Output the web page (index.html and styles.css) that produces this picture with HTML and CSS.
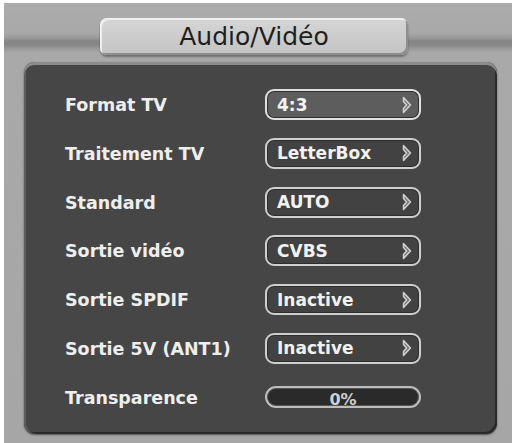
FILE: index.html
```html
<!DOCTYPE html>
<html lang="fr">
<head>
<meta charset="utf-8">
<title>Audio/Vidéo</title>
<link rel="stylesheet" href="styles.css">
</head>
<body>
<div class="screen">
  <div class="title-tab">Audio/Vidéo</div>
  <div class="panel">
    <div class="row">
      <div class="label">Format TV</div>
      <div class="value selected"><span>4:3</span><svg class="arrow" viewBox="0 0 10 18" width="10" height="18"><polygon points="1.5,1.5 8.5,9 1.5,16.5 1.5,12.5 4.5,9 1.5,5.5"/></svg></div>
    </div>
    <div class="row">
      <div class="label">Traitement TV</div>
      <div class="value"><span>LetterBox</span><svg class="arrow" viewBox="0 0 10 18" width="10" height="18"><polygon points="1.5,1.5 8.5,9 1.5,16.5 1.5,12.5 4.5,9 1.5,5.5"/></svg></div>
    </div>
    <div class="row">
      <div class="label">Standard</div>
      <div class="value"><span>AUTO</span><svg class="arrow" viewBox="0 0 10 18" width="10" height="18"><polygon points="1.5,1.5 8.5,9 1.5,16.5 1.5,12.5 4.5,9 1.5,5.5"/></svg></div>
    </div>
    <div class="row">
      <div class="label">Sortie vidéo</div>
      <div class="value"><span>CVBS</span><svg class="arrow" viewBox="0 0 10 18" width="10" height="18"><polygon points="1.5,1.5 8.5,9 1.5,16.5 1.5,12.5 4.5,9 1.5,5.5"/></svg></div>
    </div>
    <div class="row">
      <div class="label">Sortie SPDIF</div>
      <div class="value"><span>Inactive</span><svg class="arrow" viewBox="0 0 10 18" width="10" height="18"><polygon points="1.5,1.5 8.5,9 1.5,16.5 1.5,12.5 4.5,9 1.5,5.5"/></svg></div>
    </div>
    <div class="row">
      <div class="label">Sortie 5V (ANT1)</div>
      <div class="value"><span>Inactive</span><svg class="arrow" viewBox="0 0 10 18" width="10" height="18"><polygon points="1.5,1.5 8.5,9 1.5,16.5 1.5,12.5 4.5,9 1.5,5.5"/></svg></div>
    </div>
    <div class="row">
      <div class="label">Transparence</div>
      <div class="bar"><span>0%</span></div>
    </div>
  </div>
</div>
</body>
</html>
```
FILE: styles.css
```css
html, body {
  margin: 0;
  padding: 0;
  background: #ffffff;
}
body {
  padding: 3px 0 0 4px;
  width: 508px;
  height: 440px;
  overflow: hidden;
  font-family: "DejaVu Sans", Verdana, sans-serif;
}
.screen {
  width: 508px;
  height: 440px;
  display: flex;
  flex-direction: column;
  background:
    linear-gradient(to bottom,
      #acacac 0px, #a8a8a8 30px, #9a9a9a 35px, #868686 38px,
      #888888 42px, #9c9c9c 46px, #a9a9a9 50px, #a6a6a6 100%);
}
.title-tab {
  margin: 15px 0 0 96px;
  width: 308px;
  height: 37px;
  box-sizing: border-box;
  border-radius: 7px;
  background: linear-gradient(to bottom, #d6d6d6 0%, #cccccc 50%, #c4c4c4 100%);
  box-shadow:
    inset 2px 2px 0 #efefef,
    inset -2px -2px 0 #8e8e8e,
    0 2px 2px rgba(0, 0, 0, 0.35);
  color: #1e1e1e;
  font-size: 25px;
  line-height: 37px;
  text-align: center;
}
.panel {
  margin: 7px 0 0 20px;
  width: 473px;
  height: 372px;
  box-sizing: border-box;
  border-radius: 11px;
  background: #464646;
  box-shadow:
    inset 0 3px 0 #8c8c8c,
    inset 2px 0 0 #5e5e5e,
    inset -2px -2px 0 #2a2a2a,
    0 1px 2px rgba(0, 0, 0, 0.5);
  padding: 27px 0 0 41px;
  display: grid;
  grid-template-columns: 200px 156px;
  grid-auto-rows: 31px;
  row-gap: 17.8px;
  align-content: start;
}
.row {
  display: contents;
}
.label {
  color: #eeeeee;
  font-weight: bold;
  font-size: 17.5px;
  line-height: 33px;
  white-space: nowrap;
}
.value {
  box-sizing: border-box;
  height: 31px;
  border: 2px solid #cfcfcf;
  border-radius: 9px;
  background: #424242;
  box-shadow: inset 0 0 0 1px #2e2e2e;
  display: flex;
  align-items: center;
  justify-content: space-between;
  padding: 0 7px 0 10px;
  color: #f2f2f2;
  font-weight: bold;
  font-size: 17px;
}
.value.selected {
  background: #5d5d5d;
  border-color: #e0e0e0;
}
.arrow {
  display: block;
  fill: #7a7a7a;
  stroke: #d0d0d0;
  stroke-width: 1.5;
  stroke-linejoin: round;
}
.bar {
  align-self: center;
  box-sizing: border-box;
  height: 22px;
  border: 2px solid #bdbdbd;
  border-radius: 11px;
  background: #2a2a2a;
  box-shadow: inset 0 0 0 1px #555555;
  color: #cfcfcf;
  font-weight: bold;
  font-size: 16px;
  line-height: 24px;
  text-align: center;
  overflow: hidden;
}
```
